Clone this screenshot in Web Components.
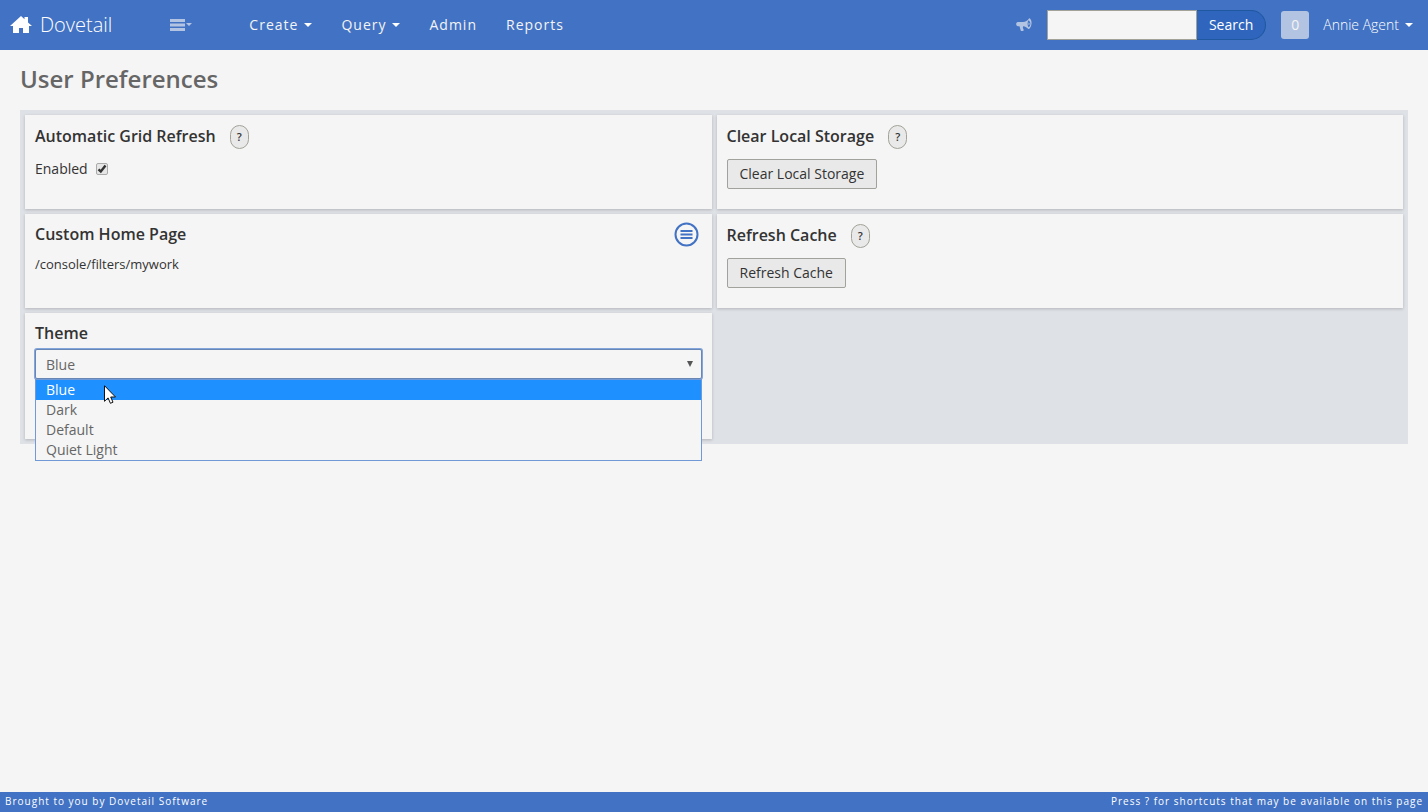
<!DOCTYPE html>
<html lang="en">
<head>
<meta charset="utf-8">
<title>User Preferences</title>
<style>
  body {
    margin: 0;
    min-height: 100vh;
    display: flex;
    flex-direction: column;
    background: #f5f5f5;
    color: #333;
    font: 14px/20px "Open Sans", "Noto Sans", sans-serif;
    --blue: #4272c3;
    --surface: #f5f5f5;
  }
</style>
</head>
<body>
<script>
function define(name, html, setup) {
  const template = document.createElement('template');
  template.innerHTML = html;

  customElements.define(name, class extends HTMLElement {
    constructor() {
      super();
      this.attachShadow({ mode: 'open' });
      this.shadowRoot.appendChild(template.content.cloneNode(true));
    }

    connectedCallback() {
      if (setup) { setup(this, this.shadowRoot); }
    }
  });
}

define('dt-nav-item', `
  <style>
    :host { display: block; }
    a {
      display: flex;
      align-items: center;
      gap: 6px;
      color: inherit;
      text-decoration: none;
      white-space: nowrap;
    }
    .caret { display: none; border: 4px solid transparent; border-top-color: #fff; border-bottom: 0; }
    :host([menu]) .caret { display: block; }
  </style>
  <a href="#"><slot></slot><span class="caret"></span></a>
`);

define('dt-search', `
  <style>
    :host { display: block; }
    form { display: flex; margin: 0; }
    input {
      box-sizing: border-box;
      width: 150px;
      height: 30px;
      margin: 0;
      padding: 4px 6px;
      border: 1px solid #a2a298;
      border-radius: 0;
      background: var(--surface);
      font: inherit;
    }
    button {
      box-sizing: border-box;
      height: 30px;
      padding: 0 12px;
      border: 1px solid #1f589f;
      border-left: 0;
      border-radius: 0 15px 15px 0;
      background: #2f65bd;
      color: #fff;
      font: inherit;
    }
  </style>
  <form>
    <input type="text" aria-label="Search">
    <button type="button">Search</button>
  </form>
`);

define('dt-navbar', `
  <style>
    :host {
      display: flex;
      align-items: center;
      box-sizing: border-box;
      height: 50px;
      padding: 0 15px 0 10px;
      background: var(--blue);
      color: #f4f4f4;
    }
    svg { display: block; }
    .brand {
      display: flex;
      align-items: center;
      gap: 8px;
      color: #fff;
      font-size: 20px;
      font-weight: 300;
      text-decoration: none;
    }
    .recent { margin-left: 58px; padding: 0; border: 0; background: none; }
    nav { display: flex; gap: 29px; margin-left: 57px; letter-spacing: 1px; }
    .right { display: flex; align-items: center; margin-left: auto; }
    .news { margin-right: 15px; }
    .count {
      width: 28px;
      margin: 0 14px 0 15px;
      border-radius: 3px;
      background: #b3c4e2;
      line-height: 28px;
      text-align: center;
    }
    .user { color: #fff; font-weight: 300; }
  </style>
  <a class="brand" href="#">
    <svg width="22" height="18" viewBox="0 0 22 18" fill="#fff"><path d="M0 10 11 0l3.500 3.200V1H18v5.400l4 3.600h-3v7h-6v-5H9v5H3v-7z"/></svg>
    Dovetail
  </a>
  <button class="recent" aria-label="Recent items">
    <svg width="22" height="12" viewBox="0 0 22 12" fill="#b3c4e2"><path d="M0 0h15v3H0zM0 4.500h15v3H0zM0 9h15v3H0zM16 4h6l-3 3z"/></svg>
  </button>
  <nav>
    <dt-nav-item menu>Create</dt-nav-item>
    <dt-nav-item menu>Query</dt-nav-item>
    <dt-nav-item>Admin</dt-nav-item>
    <dt-nav-item>Reports</dt-nav-item>
  </nav>
  <div class="right">
    <svg class="news" width="16" height="14" viewBox="0 0 16 14" fill="#b3c4e2"><path fill-rule="evenodd" d="M2 4h5c2.500 0 4.500-1.500 6-3.500C13.500-.3 16 2 15.500 5.800c-.3 3.500-2.300 5.700-3.200 5.200C11 9.500 9.300 8.600 7.200 8.300l-.4 1.200 1 2.700c-.8 1-2.200 1-3 .6L3.500 8.200H2C-.3 8-.6 4.300 2 4zM12.500 2.300c-1.200 1.700-1.200 5 0 7 2.200-.8 2.700-5.500 0-7z"/><path d="M12.500 4.500c1.500.2 1.500 2.500 0 2.800z"/></svg>
    <dt-search></dt-search>
    <span class="count">0</span>
    <dt-nav-item menu class="user">Annie Agent</dt-nav-item>
  </div>
`);

define('dt-card', `
  <style>
    :host {
      display: block;
      box-sizing: border-box;
      min-height: 94px;
      padding: 10px;
      background: var(--surface);
      box-shadow: 0 1px 3px rgba(0, 0, 0, .2);
    }
    header { display: flex; align-items: center; gap: 14px; min-height: 20px; }
    h2 { margin: 0; color: #333; font-size: 16px; font-weight: 600; line-height: 20px; }
    :host([help]) h2 { padding-bottom: 2px; }
    .help {
      display: none;
      box-sizing: border-box;
      height: 24px;
      padding: 0 6px;
      border: 1px solid #a2a298;
      border-radius: 10px;
      background: #e9e9e9;
      color: #333;
      font: 600 11px/20px "Open Sans", sans-serif;
    }
    :host([help]) .help { display: block; }
    ::slotted([slot=action]) { margin-left: auto; }
    .body { margin-top: 10px; }
  </style>
  <header><h2></h2><button class="help" aria-label="Help">?</button><slot name="action"></slot></header>
  <div class="body"><slot></slot></div>
`, (el, root) => {
  root.querySelector('h2').textContent = el.getAttribute('heading');
});

define('dt-button', `
  <style>
    :host { display: inline-block; }
    button {
      box-sizing: border-box;
      height: 30px;
      padding: 0 12px;
      border: 1px solid #a2a29c;
      border-radius: 2px;
      background: #e9e9e9;
      color: #333;
      font: inherit;
      white-space: nowrap;
    }
  </style>
  <button><slot></slot></button>
`);

define('dt-checkbox', `
  <style>
    :host { display: block; }
    label { display: inline-flex; align-items: center; gap: 8px; }
    input {
      appearance: none;
      box-sizing: border-box;
      width: 12px;
      height: 12px;
      margin: 0;
      border: 1px solid #aaa;
      border-radius: 2px;
      background: #e6e6e6;
    }
    .box { display: grid; }
    .box > * { grid-area: 1 / 1; }
    svg { pointer-events: none; visibility: hidden; }
    input:checked + svg { visibility: visible; }
  </style>
  <label>
    <slot></slot>
    <span class="box">
      <input type="checkbox" checked>
      <svg width="12" height="12" viewBox="0 0 12 12" fill="none" stroke="#333" stroke-width="2.400"><path d="M2.500 6.300 4.800 8.500 9.500 2.500"/></svg>
    </span>
  </label>
`);

define('dt-list-button', `
  <style>
    :host { display: block; height: 20px; }
    button { display: block; margin: -2px 3px 0 0; padding: 0; border: 0; background: none; }
    svg { display: block; }
  </style>
  <button aria-label="Choose home page">
    <svg width="25" height="25" viewBox="0 0 25 25" fill="none" stroke="#4272c3" stroke-width="2"><circle cx="12.500" cy="12.500" r="11"/><path d="M6.500 9h12M6.500 12.500h12M6.500 16h12"/></svg>
  </button>
`);

define('dt-select', `
  <style>
    :host { display: block; position: relative; color: #666; }
    select {
      appearance: none;
      box-sizing: border-box;
      display: block;
      width: 100%;
      height: 30px;
      padding: 1px 10px 0;
      border: 1px solid #6987b5;
      border-radius: 2px;
      outline: 0;
      background: var(--surface);
      box-shadow: 0 0 0 1px #82a5dc;
      color: inherit;
      font: inherit;
    }
    .arrow {
      position: absolute;
      top: 12px;
      right: 9px;
      border: 3px solid transparent;
      border-top: 6px solid #555;
      border-bottom: 0;
      pointer-events: none;
    }
    ul {
      position: absolute;
      z-index: 1;
      top: 100%;
      left: 0;
      right: 0;
      margin: 0;
      padding: 0;
      border: 1px solid #7099d6;
      background: var(--surface);
      list-style: none;
    }
    li { padding: 0 10px; }
    .active { background: #1e90ff; color: #fff; }
    .cursor { position: absolute; z-index: 2; top: 36px; left: 69px; }
  </style>
  <select aria-label="Theme"></select>
  <span class="arrow"></span>
  <ul></ul>
  <svg class="cursor" width="12" height="20" viewBox="0 0 12 20"><path d="M.5.700v15.600l3.600-3.400 2.300 5.400 2.600-1.100-2.300-5.200h4.800z" fill="#fff" stroke="#111"/></svg>
`, (el, root) => {
  const select = root.querySelector('select');
  const list = root.querySelector('ul');

  el.getAttribute('options').split(',').forEach((name, i) => {
    select.add(new Option(name));
    const item = document.createElement('li');
    item.textContent = name;
    if (i === 0) { item.className = 'active'; }
    list.appendChild(item);
  });
});

define('dt-preferences', `
  <style>
    :host { display: block; flex: 1; padding: 14px 20px; }
    h1 { margin: 0 0 16px; color: #666; font-size: 24px; font-weight: 600; line-height: 30px; }
    .grid {
      display: grid;
      grid-template-columns: 1fr 1fr;
      gap: 5px;
      padding: 5px;
      background: #dee1e6;
    }
    .path { font-size: 13px; }
    .theme { min-height: 126px; }
    dt-select { margin-top: -4px; }
  </style>
  <h1>User Preferences</h1>
  <div class="grid">
    <dt-card heading="Automatic Grid Refresh" help><dt-checkbox>Enabled</dt-checkbox></dt-card>
    <dt-card heading="Clear Local Storage" help><dt-button>Clear Local Storage</dt-button></dt-card>
    <dt-card heading="Custom Home Page">
      <dt-list-button slot="action"></dt-list-button>
      <div class="path">/console/filters/mywork</div>
    </dt-card>
    <dt-card heading="Refresh Cache" help><dt-button>Refresh Cache</dt-button></dt-card>
    <dt-card heading="Theme" class="theme">
      <dt-select options="Blue,Dark,Default,Quiet Light"></dt-select>
    </dt-card>
  </div>
`);

define('dt-footer', `
  <style>
    :host {
      display: flex;
      justify-content: space-between;
      padding: 0 5px 2px;
      background: var(--blue);
      color: #fff;
      font-size: 10px;
      line-height: 18px;
      letter-spacing: 1px;
    }
  </style>
  <span>Brought to you by Dovetail Software</span>
  <span>Press ? for shortcuts that may be available on this page</span>
`);
</script>
<dt-navbar></dt-navbar>
<dt-preferences></dt-preferences>
<dt-footer></dt-footer>
</body>
</html>
